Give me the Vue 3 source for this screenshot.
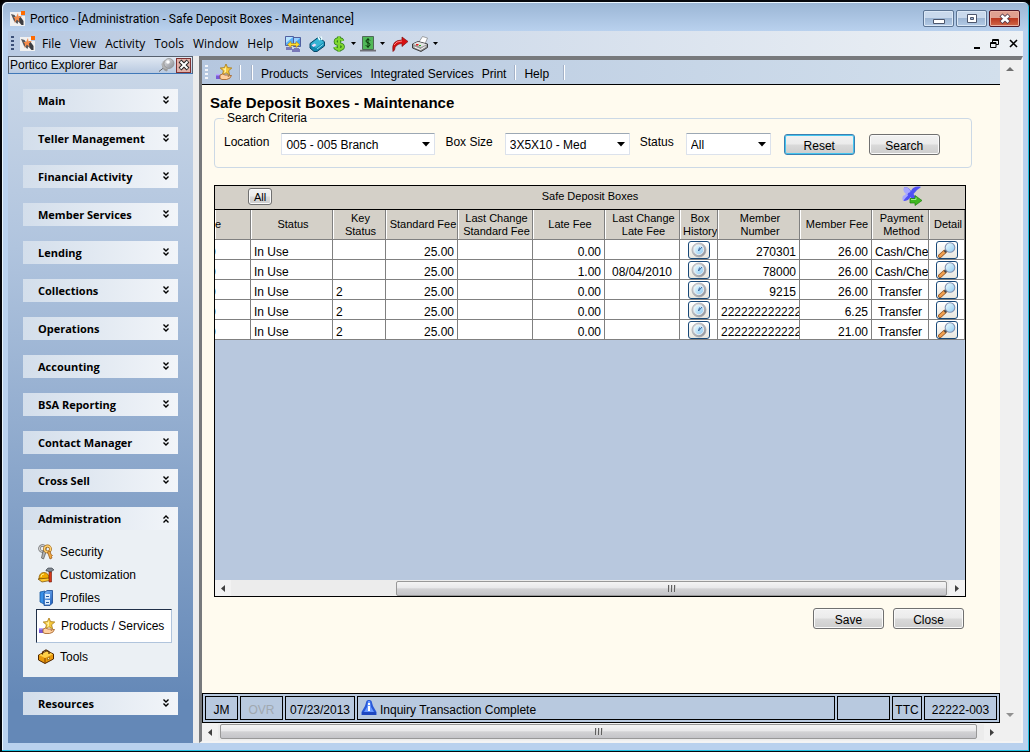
<script setup>
import { ref } from 'vue'

const menus = ['File', 'View', 'Activity', 'Tools', 'Window', 'Help']
const upperSections = [
  'Main', 'Teller Management', 'Financial Activity', 'Member Services', 'Lending', 'Collections',
  'Operations', 'Accounting', 'BSA Reporting', 'Contact Manager', 'Cross Sell'
]
const adminItems = [
  { label: 'Security', icon: 'keys' },
  { label: 'Customization', icon: 'helmet' },
  { label: 'Profiles', icon: 'cabinet' },
  { label: 'Products / Services', icon: 'star', active: true },
  { label: 'Tools', icon: 'toolbox' }
]
const columns = [
  { w: 36, lines: ['e'], cls: 'cut' },
  { w: 82, lines: ['Status'] },
  { w: 53, lines: ['Key', 'Status'] },
  { w: 72, lines: ['Standard Fee'] },
  { w: 75, lines: ['Last Change', 'Standard Fee'] },
  { w: 72, lines: ['Late Fee'] },
  { w: 75, lines: ['Last Change', 'Late Fee'] },
  { w: 38, lines: ['Box', 'History'] },
  { w: 82, lines: ['Member', 'Number'] },
  { w: 72, lines: ['Member Fee'] },
  { w: 57, lines: ['Payment', 'Method'] },
  { w: 36, lines: ['Detail'] }
]
const rows = [
  { key: '', late: '0.00', date: '', member: '270301', fee: '26.00', pay: 'Cash/Che' },
  { key: '', late: '1.00', date: '08/04/2010', member: '78000', fee: '26.00', pay: 'Cash/Che' },
  { key: '2', late: '0.00', date: '', member: '9215', fee: '26.00', pay: 'Transfer' },
  { key: '2', late: '0.00', date: '', member: '222222222222', fee: '6.25', pay: 'Transfer' },
  { key: '2', late: '0.00', date: '', member: '222222222222', fee: '21.00', pay: 'Transfer' }
]
const location = ref('005 - 005 Branch')
const boxSize = ref('3X5X10 - Med')
const status = ref('All')
</script>

<template>
  <svg class="defs" aria-hidden="true">
    <defs>
      <linearGradient id="gGlass" x1="0" y1="0" x2="1" y2="1"><stop offset="0" stop-color="#f4ffff" /><stop offset="1" stop-color="#8cc8f0" /></linearGradient>
      <linearGradient id="gSteel" x1="0" y1="0" x2="1" y2="1"><stop offset="0" stop-color="#e8e8ea" /><stop offset="1" stop-color="#83878f" /></linearGradient>
      <linearGradient id="gBlue" x1="0" y1="0" x2="1" y2="1"><stop offset="0" stop-color="#8cc4ff" /><stop offset="1" stop-color="#1858b8" /></linearGradient>
    </defs>
    <symbol id="logo" viewBox="0 0 16 16">
      <path d="M0 1h11v4h4v10H0z" fill="#f1f1f1" />
      <path d="M1 3l3.500 1 4 6-1 3L4 10z" fill="#55565a" /><path d="M8 6l2-1 3.500 5v4l-2 0-3.500-4z" fill="#3c3d42" />
      <path d="M8 2l.5 3.500L12 5l-3 2.500L9.500 11 7 8.500 4.500 12l.5-4-1.500-2L6 6z" fill="#f58a48" />
      <path d="M11 0h4v4h-4z" fill="#ff6a00" />
    </symbol>
    <symbol id="star" viewBox="0 0 16 16">
      <path d="M10 0l1.600 3.600 4.200.4-3.200 2.800 1 4.200-3.600-2.200L6.400 11l1-4.200L4.200 4l4.200-.4z" fill="#f5c83c" stroke="#a87818" stroke-width=".8" />
      <path d="M10 2v6l-2 1.500.8-3L6.500 4.600l2.500-.2z" fill="#fff0a0" />
      <path d="M0 10h4v5H0z" fill="#7858d8" /><path d="M0 10h4v1.500H0z" fill="#b8a8ff" />
      <path d="M4 11q3-2 5 0h3q1 1 0 1.500 2-1.500 3.500-1-1 3.500-5 4H6l-2-1z" fill="#ffd0a0" stroke="#a05c20" stroke-width=".8" />
    </symbol>
    <symbol id="monitors" viewBox="0 0 16 16">
      <path d="M.5.5h8v9h-8z" fill="#58b0f8" stroke="#5060a0" /><path d="M1 1h7L1 7z" fill="#b8e4ff" />
      <path d="M8.500 1.500h7v9h-7z" fill="#48a0f0" stroke="#5060a0" /><path d="M9 2h6L9 8z" fill="#98d0ff" />
      <path d="M1 11h6v3H1zM9 12h5v1H9zM7 13h8v3H7z" fill="#7878b8" />
      <path d="M2.500 8.500L6 5.500v2h5v-2l3.500 3-3.500 3v-2H6v2z" fill="#ffe030" stroke="#b08010" stroke-width=".6" />
    </symbol>
    <symbol id="blueBook" viewBox="0 0 16 16">
      <path d="M1 7.500L9 1.500l3 1L15.500 6v4L8 15.500H5L1 12z" fill="#1088b0" stroke="#084868" />
      <path d="M1.500 8L9 2.500l6 3.500-8 6z" fill="#38b4d4" /><path d="M2.500 9.500l3-2 2 1.500-3 2z" fill="#f0d8f8" />
      <path d="M9 1l2 3M12 .5l1 3.500" stroke="#e8fcff" stroke-width="1.600" /><path d="M8 13l6.500-5" stroke="#90e0f0" stroke-width="1" />
    </symbol>
    <symbol id="dollar" viewBox="0 0 12 16">
      <path d="M9.500 5Q9 3 6 3 2.500 3 2.500 5.500T6 8q4 .5 4 2.800T6 13.300Q2.500 13 2 11M6 .5v15" fill="none" stroke="#287818" stroke-width="3.600" />
      <path d="M9.500 5Q9 3 6 3 2.500 3 2.500 5.500T6 8q4 .5 4 2.800T6 13.300Q2.500 13 2 11M6 .5v15" fill="none" stroke="#80d830" stroke-width="2.200" />
    </symbol>
    <symbol id="cash" viewBox="0 0 16 16">
      <path d="M0 13h16v2.500H0z" fill="#707078" /><path d="M0 13h16v1H0z" fill="#c0c0c8" />
      <path d="M2.500.5h11v13h-11z" fill="#50b858" stroke="#506858" />
      <path d="M10 4.500Q9.500 3.500 8 3.500 6 3.500 6 5t2 1.800 2 1.900-2 1.800q-1.700 0-2.200-1.300M8 2v10" fill="none" stroke="#083808" stroke-width="1" />
    </symbol>
    <symbol id="redArrow" viewBox="0 0 16 16">
      <path d="M1 15.500Q-1 4 10 4V1l6 4.500-6 5V7.500Q3 8 2.500 14z" fill="#d81010" stroke="#801010" stroke-width=".7" />
      <path d="M2 9q2-4 8-4" stroke="#ff8080" fill="none" />
    </symbol>
    <symbol id="printer" viewBox="0 0 17 16">
      <path d="M7 6l3.500-5.500 5 1.500L12.500 9z" fill="#fff" stroke="#808080" stroke-width=".7" />
      <path d="M.5 8L6 5.500 15.500 8v3.500L9 15.500.5 12z" fill="#9c9c9c" stroke="#303030" stroke-width=".9" />
      <path d="M1 8l5-2.200L15 8.200 9 11z" fill="#e4e4e4" /><path d="M2.500 11l6 2.500 5-3" stroke="#fff" fill="none" />
      <path d="M4 8h2.500v1.500H4z" fill="#e02020" /><path d="M7 9h2v1H7z" fill="#20b020" />
    </symbol>
    <symbol id="pin" viewBox="0 0 16 14">
      <path d="M0 13.500l5-4" stroke="#606060" /><path d="M2.500 5.500Q5 6 9 12l-1.500 1.500Q3 12 2.500 5.500z" fill="#9a9a9a" />
      <circle cx="7.500" cy="6.500" r="4.500" fill="#b4b4b4" /><circle cx="10" cy="5.500" r="5" fill="url(#gSteel)" stroke="#8c8c8c" stroke-width=".7" /><circle cx="9" cy="4" r="1.800" fill="#fff" />
    </symbol>
    <symbol id="keys" viewBox="0 0 16 16">
      <circle cx="4.500" cy="4.500" r="3" fill="none" stroke="#707070" stroke-width="2.600" /><circle cx="4.500" cy="4.500" r="3" fill="none" stroke="#d0d0d0" stroke-width="1.200" />
      <path d="M5 7L3.500 14l2 1L8 8z" fill="#b0b0b0" stroke="#505050" stroke-width=".7" />
      <circle cx="9.500" cy="5" r="3" fill="none" stroke="#a06818" stroke-width="2.800" /><circle cx="9.500" cy="5" r="3" fill="none" stroke="#ffd070" stroke-width="1.400" />
      <path d="M9.500 8l2.500 7 2-1-.5-1.500 1-1-1.500-1L12 7z" fill="#f0a840" stroke="#905010" stroke-width=".7" />
    </symbol>
    <symbol id="helmet" viewBox="0 0 16 16">
      <path d="M1 12Q1 5.500 6 5.500T11 12z" fill="#f0a800" stroke="#906000" stroke-width=".8" /><path d="M3 10q0-3 3-3" stroke="#fff080" fill="none" />
      <path d="M0 12l11-1 1 2.500-8 1.500z" fill="#ffc830" stroke="#704800" stroke-width=".7" />
      <path d="M8 3l2-2h4l2 2-2 .5v1h-4V4H8z" fill="#808890" stroke="#303840" stroke-width=".6" /><path d="M11 5h2.500v10H11z" fill="#d83818" stroke="#701808" stroke-width=".6" />
    </symbol>
    <symbol id="cabinet" viewBox="0 0 16 16">
      <path d="M2 2l5-1 1 14-6-3z" fill="#3890e8" stroke="#1858a0" stroke-width=".8" />
      <path d="M6 3l3-2.500h5.500V13L12 15.500H6z" fill="url(#gBlue)" stroke="#184890" stroke-width=".8" />
      <path d="M7 4h5v4.500H7zM7 10h5v4.500H7z" fill="#e0eefc" /><path d="M8 6h3v1H8zM8 12h3v1H8z" fill="#285898" />
    </symbol>
    <symbol id="toolbox" viewBox="0 0 16 16">
      <path d="M.5 6L9 2l6.500 3v5L7 14.500.5 11z" fill="#e8980c" stroke="#502800" />
      <path d="M1 6l8-3.500L15 5.200 7 9z" fill="#ffd048" /><path d="M7 9v5" stroke="#804000" />
      <path d="M4.500 5.500V3L8 1l3 1.500V5" fill="none" stroke="#502800" stroke-width="1.200" /><path d="M9.500 9l2-1v2l-2 1z" fill="#fff0a0" stroke="#704000" stroke-width=".5" />
    </symbol>
    <symbol id="export" viewBox="0 0 20 20">
      <path d="M2 1.500Q6 0 9 5 11 0 17 .5q2.500 0 1.500 1Q14 4 11.500 8q2 4 6 6-7 1.500-9-3-2 4-7 4-1-2 3.500-7-3-4-3-6.500z" fill="#5050f4" />
      <path d="M2 1.500q5-1 6.500 4.500-4 1-2.500 3.500Q2 13 1.500 15-.5 13 1 10q2-1 3-2Q0 5 2 1.500z" fill="#a8a8ff" />
      <path d="M8 12.500h5V9.500l7 5-7 5V17H8z" fill="#40b820" stroke="#208010" stroke-width=".7" /><path d="M9 13.500h5v-2" stroke="#a0f080" fill="none" />
    </symbol>
    <symbol id="clock" viewBox="0 0 16 16">
      <circle cx="8" cy="8" r="7" fill="url(#gSteel)" stroke="#a4a8ae" stroke-width=".8" /><circle cx="7.800" cy="7.800" r="4.900" fill="url(#gGlass)" stroke="#f4f8fc" stroke-width=".8" />
      <path d="M7.500 9l3.500-4M7.500 9l1-3.500" stroke="#3c64a0" fill="none" />
    </symbol>
    <symbol id="lens" viewBox="0 0 18 16">
      <path d="M2 14l5-4.500" stroke="#905020" stroke-width="3.800" stroke-linecap="round" /><path d="M2 14l5-4.500" stroke="#f0a050" stroke-width="2.400" stroke-linecap="round" />
      <path d="M6.500 10l3-2.500" stroke="#484848" stroke-width="2.400" /><circle cx="12" cy="5.500" r="4.800" fill="url(#gGlass)" stroke="#8494b4" stroke-width="1.100" />
    </symbol>
    <symbol id="info" viewBox="0 0 16 15">
      <path d="M5.500 1L7 0h2l1.500 1L12 6l3.500 6v3H.5v-3L4 6z" fill="#2858d8" /><path d="M7 1h2l1 6 3 5H3l3-5z" fill="#6898ff" />
      <path d="M7 3h2v2H7zM7 6h2v5H7z" fill="#fff" /><path d="M1 12h14v3H1z" fill="#183cb0" opacity=".6" />
    </symbol>
    <symbol id="down" viewBox="0 0 8 5"><path d="M0 0h8L4 4.500z" /></symbol>
    <symbol id="small" viewBox="0 0 5 3"><path d="M0 0h5L2.500 3z" /></symbol>
    <symbol id="chev" viewBox="0 0 8 9">
      <path d="M1.500.5l2.500 2.500L6.500.5M1.500 4.500L4 7l2.500-2.500" fill="none" stroke="#000" stroke-width="1.400" />
    </symbol>
  </svg>

  <div class="window">
    <header class="titlebar">
      <svg class="i16"><use href="#logo" /></svg>
      <span class="caption">Portico - [Administration - Safe Deposit Boxes - Maintenance]</span>
      <div class="winbtns">
        <button class="wb" aria-label="Minimize"><svg width="12" height="12"><path d="M.5 6.500h11v4H.5z" fill="#fff" stroke="#4c566c" /></svg></button>
        <button class="wb" aria-label="Maximize"><svg width="12" height="12"><path d="M1.500 1.500h9v8h-9z" fill="#fff" stroke="#4c566c" /><path d="M4.500 4.500h3v2h-3z" fill="#9cb4d4" stroke="#4c566c" /></svg></button>
        <button class="wb red" aria-label="Close window"><svg width="12" height="12"><path d="M2 2l8 7.500M10 2L2 9.500" stroke="#503848" stroke-width="4.400" /><path d="M2.500 2.500l7 6.500M9.500 2.500l-7 6.500" stroke="#fff" stroke-width="2.600" /></svg></button>
      </div>
    </header>

    <nav class="menubar" aria-label="Main menu">
      <span class="grip"></span>
      <svg class="i16 mlogo"><use href="#logo" /></svg>
      <div class="menus"><button v-for="m in menus" :key="m">{{ m }}</button></div>
      <div class="tools">
        <button aria-label="Connect"><svg class="i16"><use href="#monitors" /></svg></button>
        <button aria-label="Reference"><svg class="i16"><use href="#blueBook" /></svg></button>
        <button class="split" aria-label="Money"><svg class="i12"><use href="#dollar" /></svg><svg class="tri"><use href="#small" /></svg></button>
        <button class="split close" aria-label="Cash"><svg class="i16"><use href="#cash" /></svg><svg class="tri"><use href="#small" /></svg></button>
        <button class="near" aria-label="Forward"><svg class="i16"><use href="#redArrow" /></svg></button>
        <button class="split close" aria-label="Print page"><svg class="i17"><use href="#printer" /></svg><svg class="tri"><use href="#small" /></svg></button>
      </div>
      <div class="mdi">
        <button aria-label="Minimize document"><svg width="7" height="10"><path d="M0 8h6v2H0z" /></svg></button>
        <button aria-label="Restore document"><svg width="10" height="10"><path d="M2.500 4V.5h6v5H6M2 1.500h7M.5 3.500h5.500v5h-5.500zM0 4.500h6" fill="none" stroke="#000" /></svg></button>
        <button aria-label="Close document"><svg width="9" height="9"><path d="M1 1l7 7M8 1L1 8" stroke="#000" stroke-width="1.600" /></svg></button>
      </div>
    </nav>

    <div class="body">
      <aside class="explorer">
        <div class="exhead">
          <span>Portico Explorer Bar</span>
          <button aria-label="Pin"><svg class="pin"><use href="#pin" /></svg></button>
          <button class="exclose" aria-label="Close explorer bar"><svg width="12" height="12"><path d="M2 2l8 8M10 2l-8 8" stroke="#222" stroke-width="4" /><path d="M2.500 2.500l7 7M9.500 2.500l-7 7" stroke="#fff" stroke-width="2" /></svg></button>
        </div>
        <div class="sections">
          <button v-for="s in upperSections" :key="s" class="sec">{{ s }}<svg class="chev"><use href="#chev" /></svg></button>
          <section>
            <button class="sec">Administration<svg class="chev up"><use href="#chev" /></svg></button>
            <ul class="items">
              <li v-for="it in adminItems" :key="it.label">
                <a href="#" :class="{ active: it.active }"><svg class="i16"><use :href="'#' + it.icon" /></svg>{{ it.label }}</a>
              </li>
            </ul>
          </section>
          <button class="sec">Resources<svg class="chev"><use href="#chev" /></svg></button>
        </div>
      </aside>

      <div class="frame">
        <div class="doc">
          <nav class="docbar" aria-label="Document menu">
            <span class="grip pale"></span>
            <svg class="i16"><use href="#star" /></svg>
            <i class="sep"></i><i class="sep second"></i>
            <button>Products</button><button>Services</button><button>Integrated Services</button><button>Print</button>
            <i class="sep"></i><button>Help</button><i class="sep last"></i>
          </nav>

          <main class="content">
            <h1>Safe Deposit Boxes - Maintenance</h1>
            <fieldset>
              <legend>Search Criteria</legend>
              <form class="criteria" @submit.prevent>
                <label for="loc">Location</label>
                <span class="sel wide"><select id="loc" v-model="location"><option>005 - 005 Branch</option></select><svg><use href="#down" /></svg></span>
                <label for="size">Box Size</label>
                <span class="sel mid"><select id="size" v-model="boxSize"><option>3X5X10 - Med</option></select><svg><use href="#down" /></svg></span>
                <label for="stat">Status</label>
                <span class="sel"><select id="stat" v-model="status"><option>All</option></select><svg><use href="#down" /></svg></span>
                <button type="button" class="btn focus">Reset</button>
                <button type="submit" class="btn">Search</button>
              </form>
            </fieldset>

            <section class="grid">
              <div class="ghead">
                <button class="btn all">All</button>
                <h2>Safe Deposit Boxes</h2>
                <button class="export" aria-label="Export"><svg><use href="#export" /></svg></button>
              </div>
              <table>
                <colgroup><col v-for="(c, i) in columns" :key="i" :style="{ width: c.w + 'px' }" /></colgroup>
                <thead>
                  <tr><th v-for="(c, i) in columns" :key="i" :class="c.cls"><span v-for="l in c.lines" :key="l">{{ l }}</span></th></tr>
                </thead>
                <tbody>
                  <tr v-for="(r, i) in rows" :key="i">
                    <td class="hid">0</td>
                    <td>In Use</td>
                    <td>{{ r.key }}</td>
                    <td class="num">25.00</td>
                    <td></td>
                    <td class="num">{{ r.late }}</td>
                    <td class="mid">{{ r.date }}</td>
                    <td class="ic"><button aria-label="Box history"><svg class="i16"><use href="#clock" /></svg></button></td>
                    <td class="num">{{ r.member }}</td>
                    <td class="num">{{ r.fee }}</td>
                    <td :class="{ mid: r.pay === 'Transfer' }">{{ r.pay }}</td>
                    <td class="ic"><button aria-label="Detail"><svg class="lens"><use href="#lens" /></svg></button></td>
                  </tr>
                </tbody>
              </table>
              <div class="hbar inner">
                <button aria-label="Scroll table left"><svg width="4" height="7"><path d="M4 0v7L0 3.500z" /></svg></button>
                <div class="track"><span class="thumb part"><i></i><i></i><i></i></span></div>
                <button aria-label="Scroll table right"><svg width="4" height="7"><path d="M0 0v7l4-3.500z" /></svg></button>
              </div>
            </section>

            <div class="actions"><button class="btn">Save</button><button class="btn">Close</button></div>
          </main>

          <footer class="status">
            <span class="c1">JM</span><span class="c2">OVR</span><span class="c3">07/23/2013</span>
            <span class="msg"><svg><use href="#info" /></svg>Inquiry Transaction Complete</span>
            <span class="c5"></span><span class="c6">TTC</span><span class="c7">22222-003</span>
          </footer>
        </div>

        <div class="vbar">
          <button aria-label="Scroll up"><svg width="8" height="4"><path d="M0 4h8L4 0z" fill="#707070" /></svg></button>
          <button aria-label="Scroll down"><svg width="8" height="4"><path d="M0 0h8L4 4z" fill="#909090" /></svg></button>
        </div>

        <div class="hbar outer">
          <button aria-label="Scroll left"><svg width="4" height="7"><path d="M4 0v7L0 3.500z" /></svg></button>
          <div class="track"><span class="thumb"><i></i><i></i><i></i></span></div>
          <button aria-label="Scroll right"><svg width="4" height="7"><path d="M0 0v7l4-3.500z" /></svg></button>
        </div>
      </div>
    </div>
  </div>
</template>

<style>
body { background: #000; }
</style>

<style scoped>
* { box-sizing: border-box; }
.defs { position: absolute; width: 0; height: 0; }
button { font: inherit; color: inherit; background: none; border: 0; padding: 0; margin: 0; white-space: nowrap; }
svg { display: block; flex: none; }
.i16 { width: 16px; height: 16px; }
.i17 { width: 17px; height: 16px; }
.i12 { width: 12px; height: 16px; }
.window {
  min-height: 100vh; display: flex; flex-direction: column;
  border: solid #05070c; border-width: 2px 1px 1px 2px; border-radius: 7px 7px 0 0;
  padding: 0 6px 8px; background: #b9d1ee;
  box-shadow: inset -1px -1px #20c0e0, inset 1px 1px #eaf6ff;
  background-image: linear-gradient(#9ab5d4, #b9d1ee 29px);
  font: 12px/16px "Liberation Sans", Arial, sans-serif; color: #000;
}
.titlebar { display: flex; align-items: center; height: 29px; padding: 3px 3px 0 2px; font: 12px/16px Roboto, "Noto Sans", sans-serif; }
.caption { flex: 1; margin-left: 4px; padding-top: 2px; }
.titlebar .i16 { margin-top: 2px; }
.winbtns { display: flex; gap: 2px; margin-top: 1px; }
.wb { width: 31px; height: 17px; display: grid; place-items: center; border: 1px solid #5c7493; border-radius: 2px; background: linear-gradient(#c9d9ec 46%, #9db6d4 50%, #b4cbe6); box-shadow: inset 0 0 0 1px #dbe8f6; }
.red { border-color: #501828; background: linear-gradient(#e0a090 46%, #bb3820 50%, #d06848); box-shadow: inset 0 0 0 1px #eab0a0; }
.menubar { display: flex; align-items: center; height: 25px; padding: 0 5px 0 3px; background: linear-gradient(90deg, #b9cae2, #edf1f5); font: 12px/16px "Open Sans", "Noto Sans", sans-serif; }
.grip { width: 3px; height: 15px; background: repeating-linear-gradient(#3c5078 0 2px, transparent 2px 4px); margin-right: 6px; }
.mlogo { margin-right: 6px; }
.menus { display: flex; gap: 9px; }
.tools { display: flex; gap: 8px; margin-left: 12px; align-items: center; }
.split { display: flex; align-items: center; gap: 6px; }
.split.close { gap: 4px; margin-left: -4px; }
.near { margin-left: -1px; }
.tri { width: 5px; height: 3px; }
.mdi { display: flex; align-items: center; gap: 9px; margin-left: auto; }
.body { flex: 1; display: flex; background: #ececec; }
.explorer { width: 185px; flex: none; display: flex; flex-direction: column; background: linear-gradient(#cbd8e8, #b0c4de 28%, #6488b7 94%); }
.exhead { display: flex; align-items: center; height: 18px; padding: 0 1px; border: 1px solid #56606e; border-bottom: 1px solid #4078b8; background: linear-gradient(#e0e8f2, #b8c9e0); }
.exhead span { flex: 1; }
.pin { width: 16px; height: 14px; }
.exclose { width: 15px; height: 15px; display: grid; place-items: center; border: 1px solid #803030; background: #e0b0a8; margin-left: 1px; }
.sections { padding: 15px 15px 26px; display: flex; flex-direction: column; gap: 15px; }
.sec { display: flex; align-items: center; justify-content: space-between; width: 155px; height: 23px; padding: 0 8px 0 15px; background: linear-gradient(90deg, #d3deeb, #f2f5f9); font: bold 11px/16px "Open Sans", "Noto Sans", sans-serif; }
.chev { width: 8px; height: 9px; }
.up { transform: scaleY(-1); }
.items { list-style: none; margin: 0; padding: 10px 6px 9px 13px; width: 155px; background: #ebf0f4; }
.items a { display: flex; align-items: center; gap: 6px; height: 23px; padding: 0 2px; color: #000; text-decoration: none; white-space: nowrap; }
.items a.active { height: 34px; margin-bottom: 2px; background: #fff; border: 1px solid #b0c4dc; border-top-color: #203048; border-left-color: #203048; }
.frame { flex: 1; min-width: 0; margin-left: 6px; display: grid; grid-template-columns: minmax(0, 1fr) 16px; grid-template-rows: 1fr 18px; border: solid #77797c; border-width: 4px 2px 2px 3px; border-right-color: #f4f4f4; border-bottom-color: #f4f4f4; background: #f0f0f0; column-gap: 2px; padding-right: 3px; }
.doc { display: flex; flex-direction: column; background: #fffbef; }
.docbar { display: flex; align-items: center; height: 25px; padding-left: 3px; border-bottom: 1px solid #000; background: linear-gradient(90deg, #b5c7df, #d2dfec); }
.docbar button { margin-right: 8px; padding-top: 3px; }
.pale { background: repeating-linear-gradient(#f4f6fa 0 2px, transparent 2px 4px); margin-right: 8px; }
.sep { width: 2px; height: 15px; background: linear-gradient(90deg, #a4b2c8 50%, #fff 50%); margin: 0 8px 0 0; }
.docbar .i16 { margin-right: 7px; }
.sep.second { margin-left: 2px; }
.sep.last { margin-left: 6px; }
.content { flex: 1; display: flex; flex-direction: column; padding: 9px 28px 64px 12px; }
h1 { margin: 0 0 0 -4px; font: bold 15px/17px "Liberation Sans", Arial, sans-serif; }
fieldset { margin: 0; min-width: 0; height: 57px; border: 1px solid #ccd9e6; border-radius: 4px; padding: 0 9px; }
legend { padding: 0 3px; line-height: 14px; }
.criteria { display: flex; align-items: center; padding-top: 8px; }
.criteria label { margin-right: 12px; margin-top: -4px; }
.sel { position: relative; width: 85px; height: 22px; margin-right: 13px; }
.sel svg { position: absolute; right: 5px; top: 9px; width: 8px; height: 5px; pointer-events: none; }
.wide { width: 154px; margin-right: 10px; }
.mid.sel { width: 125px; margin-right: 10px; }
select { appearance: none; width: 100%; height: 22px; padding: 2px 4px 0; margin: 0; border: 1px solid #dce2ec; border-top-color: #9ca8b4; border-radius: 1px; background: #fff; font: inherit; color: #000; }
.btn { width: 71px; height: 21px; padding-top: 3px; border: 1px solid #707070; border-radius: 3px; background: linear-gradient(#f2f2f2, #ebebeb 48%, #dadada 52%, #cdcdcd); box-shadow: inset 0 0 0 1px #fafafa; line-height: 16px; }
.criteria .btn + .btn { margin-left: 14px; }
.focus { border-color: #3c7fb1; box-shadow: inset 0 0 0 1px #44c4ee; }
.grid { flex: 1; display: flex; flex-direction: column; margin: 17px 6px 0 0; border: 1px solid #000; background: #b8c8de; min-height: 200px; }
.ghead { display: grid; grid-template-columns: 1fr auto 1fr; align-items: center; height: 24px; background: #d4d0c8; border-bottom: 1px solid #000; font-size: 11px; }
.all { width: 24px; height: 17px; margin-left: 33px; padding: 2px 0 0; line-height: 13px; align-self: start; margin-top: 2px; }
h2 { margin: 0; padding-bottom: 3px; font: 11px/14px "Liberation Sans", Arial, sans-serif; }
.export { justify-self: end; margin-right: 43px; align-self: start; }
.export svg { width: 20px; height: 20px; }
table { width: 100%; table-layout: fixed; border-collapse: separate; border-spacing: 0; background: #fff; }
th { height: 30px; padding: 0; font: 11px/13px "Liberation Sans", Arial, sans-serif; background: #d4d0c8; border: solid #808080; border-width: 0 1px 1px 0; box-shadow: inset 1px 0 #fff; white-space: nowrap; overflow: hidden; padding-left: 3px; }
th span { display: block; }
th.cut { text-align: left; padding: 0; }
td { height: 20px; padding: 5px 3px 0; border: solid #808080; border-width: 0 1px 1px 0; line-height: 14px; white-space: nowrap; overflow: hidden; }
td.hid { text-indent: -9px; }
td.num { text-align: right; }
td.mid { text-align: center; padding-left: 2px; padding-right: 2px; }
td.ic { padding: 0; }
td.ic button { display: grid; place-items: center; width: 22px; height: 18px; margin: 0 auto; border: 1px solid #184878; border-radius: 3px; background: linear-gradient(#fff, #e8e6de); }
.lens { width: 18px; height: 16px; }
.hbar { display: flex; height: 16px; background: #ececec; fill: #404040; }
.hbar > button { width: 16px; display: grid; place-items: center; background: #f2f2f2; }
.inner { margin-top: auto; }
.outer { margin-top: 1px; height: 16px; }
.track { flex: 1; display: flex; justify-content: flex-end; padding: 1px 2px 0 1px; }
.outer .track { padding: 0 7px 0 2px; }
.thumb { flex: 1; height: 15px; display: flex; align-items: center; justify-content: center; gap: 1px; border: 1px solid #989898; border-radius: 2px; background: linear-gradient(#f4f4f4, #e8e8ea 46%, #d2d2d4 52%, #c4c4c8); }
.thumb i { width: 2px; height: 7px; background: linear-gradient(90deg, #606060 50%, #d0d0d0 50%); }
.part { flex: 0 0 77%; }
.actions { display: flex; justify-content: flex-end; gap: 9px; padding: 11px 8px 0 0; }
.actions { padding-right: 8px; }
.status { display: flex; gap: 2px; height: 30px; padding: 2px; border: 1px solid #000; background: #b8c9df; }
.status span { display: flex; align-items: center; justify-content: center; height: 24px; padding-top: 3px; border: 1px solid #000; }
.c1 { width: 33px; } .c2 { width: 43px; color: #a0a8b0; } .c3 { width: 70px; } .c5 { width: 53px; } .c6 { width: 30px; } .c7 { width: 73px; }
.status .msg { flex: 1; justify-content: flex-start; padding-left: 3px; gap: 3px; }
.msg svg { width: 16px; height: 15px; margin-top: -5px; }
.vbar { display: flex; flex-direction: column; justify-content: space-between; }
.vbar button { height: 17px; display: grid; place-items: center; }
</style>
